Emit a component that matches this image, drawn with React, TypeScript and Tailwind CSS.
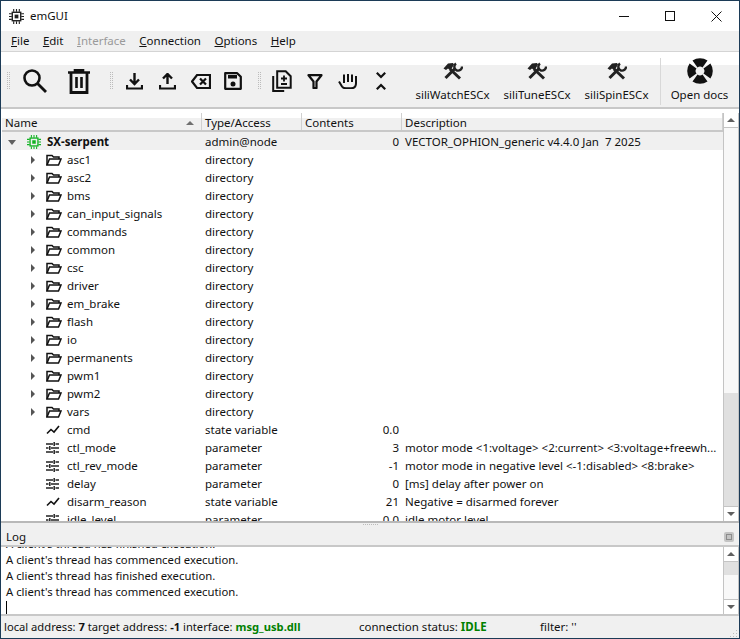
const dirs = ["asc1", "asc2", "bms", "can_input_signals", "commands", "common", "csc", "driver", "em_brake", "flash", "io", "permanents", "pwm1", "pwm2", "vars"];

const leaves = [
  { name: "cmd", kind: "state variable", value: "0.0", desc: "" },
  { name: "ctl_mode", kind: "parameter", value: "3", desc: "motor mode <1:voltage> <2:current> <3:voltage+freewh..." },
  { name: "ctl_rev_mode", kind: "parameter", value: "-1", desc: "motor mode in negative level <-1:disabled> <8:brake>" },
  { name: "delay", kind: "parameter", value: "0", desc: "[ms] delay after power on" },
  { name: "disarm_reason", kind: "state variable", value: "21", desc: "Negative = disarmed forever" },
  { name: "idle_level", kind: "parameter", value: "0.0", desc: "idle motor level" },
];

const gripDots = [0, 2, 4, 6, 8, 10, 12, 14, 16];

function Grip({ className }: { className: string }) {
  return (
    <svg width="4" height="18" viewBox="0 0 4 18" fill="#bcbcbc" className={`shrink-0 ${className}`}>
      {gripDots.map((y) => (
        <g key={y}>
          <rect x="0" y={y} width="1" height="1" />
          <rect x="2" y={y} width="1" height="1" />
        </g>
      ))}
    </svg>
  );
}

function Icon({ w, h, className, children }: { w: number; h: number; className: string; children: React.ReactNode }) {
  return (
    <svg width={w} height={h} viewBox={`0 0 ${w} ${h}`} fill="none" stroke="#111" strokeWidth="2.2" className={`shrink-0 ${className}`}>
      {children}
    </svg>
  );
}

function Folder() {
  return (
    <svg width="16" height="14" viewBox="0 0 16 14" fill="none" stroke="#111" strokeWidth="1.5">
      <path d="M1 12V2.500h5l1.500 1.500H13v2" />
      <path d="M1 12l2.500-6H15l-2.500 6z" />
    </svg>
  );
}

function Wave() {
  return (
    <svg width="14" height="10" viewBox="0 0 14 10" fill="none" stroke="#111" strokeWidth="1.6">
      <path d="M1 8.500l4-4 3 2.500 5-6" />
    </svg>
  );
}

function Sliders() {
  return (
    <svg width="13" height="12" viewBox="0 0 13 12" fill="none" stroke="#222" strokeWidth="1.5">
      <path d="M0 2h7M9.500 2H13M8.200 0v4M0 6h2.500M5 6h8M3.800 4v4M0 10h7M9.500 10H13M8.200 8v4" />
    </svg>
  );
}

function Tools() {
  return (
    <svg width="20" height="18" viewBox="0 0 20 18" fill="none" stroke="#222">
      <path d="M2.500 16L12.500 6" strokeWidth="3" />
      <path d="M13 1.500a4 4 0 0 0 1 7 4 4 0 0 0 5-4" strokeWidth="2.400" />
      <path d="M7 7l10 9.500" strokeWidth="3" />
      <path d="M0.500 6.500L5 1.500l5-.5 1 1.500-3.500 6L5 6.500 3 8z" fill="#222" stroke="none" />
    </svg>
  );
}

function Docs() {
  return (
    <svg width="26" height="26" viewBox="0 0 26 26" fill="#111">
      <path d="M5.500 2.600a13 13 0 0 1 15 0L15.500 9.500a4 4 0 0 0-5 0z" />
      <path d="M23.400 5.500a13 13 0 0 1 0 15L16.500 15.500a4 4 0 0 0 0-5z" />
      <path d="M20.500 23.400a13 13 0 0 1-15 0L10.500 16.500a4 4 0 0 0 5 0z" />
      <path d="M2.600 20.500a13 13 0 0 1 0-15L9.500 10.500a4 4 0 0 0 0 5z" />
    </svg>
  );
}

function Chip({ color, size }: { color: string; size: number }) {
  return (
    <svg width={size} height={size} viewBox="0 0 16 16" fill="none" stroke={color}>
      <rect x="3.500" y="3.500" width="9" height="9" strokeWidth="1.500" />
      <rect x="6" y="6" width="4" height="4" fill={color} stroke="none" />
      <path d="M5 0v3M8 0v3M11 0v3M5 13v3M8 13v3M11 13v3M0 5h3M0 8h3M0 11h3M13 5h3M13 8h3M13 11h3" strokeWidth="1.200" />
    </svg>
  );
}

function TreeRow({ name, kind, value, desc, icon, arrow }: { name: string; kind: string; value?: string; desc?: string; icon: React.ReactNode; arrow?: boolean }) {
  return (
    <div className="flex h-[18px] shrink-0 items-center pt-[2px]">
      <div className="flex w-[200px] items-center">
        <div className="flex w-[44px] justify-end pr-[11px]">
          {arrow && <div className="h-0 w-0 border-y-[4px] border-l-[4px] border-y-transparent border-l-[#555]" />}
        </div>
        <div className="flex w-[21px] items-center">{icon}</div>
        <span className="whitespace-nowrap">{name}</span>
      </div>
      <div className="w-[100px] pl-[3px]">{kind}</div>
      <div className="w-[100px] pr-[3px] text-right">{value}</div>
      <div className="whitespace-nowrap pl-[3px]">{desc}</div>
    </div>
  );
}

function ScrollButton({ up }: { up?: boolean }) {
  return (
    <div className={up ? "flex h-[15px] shrink-0 items-center justify-center border-b border-[#c4c4c4] bg-white" : "flex h-[15px] shrink-0 items-center justify-center border-t border-[#c4c4c4] bg-white"}>
      <div className={up ? "h-0 w-0 border-x-[4px] border-b-[4px] border-x-transparent border-b-[#606060]" : "h-0 w-0 border-x-[4px] border-t-[4px] border-x-transparent border-t-[#606060]"} />
    </div>
  );
}

function HeaderCell({ label, width, sort }: { label: string; width: string; sort?: boolean }) {
  return (
    <div className={`flex h-[17px] items-center justify-between border-r border-[#d0d0d0] bg-gradient-to-b from-white from-30% to-[#f0f0f0] to-30% pl-[3px] pr-[7px] pt-[2px] ${width}`}>
      <span>{label}</span>
      {sort && <div className="h-0 w-0 border-x-[4px] border-b-[4px] border-x-transparent border-b-[#707070]" />}
    </div>
  );
}

export default function App() {
  return (
    <div className="flex h-[639px] w-[740px] flex-col overflow-hidden border border-[#1c3b57] bg-white font-['Noto_Sans',sans-serif] text-[11.5px] text-[#111]">
      {/* Title bar */}
      <div className="flex h-[30px] shrink-0 items-center">
        <div className="ml-[8px] mr-[6px]"><Chip color="#222" size={15} /></div>
        <span>emGUI</span>
        <div className="ml-auto flex items-center">
          <div className="flex h-[30px] w-[46px] items-center justify-center"><div className="h-px w-[10px] bg-[#111]" /></div>
          <div className="flex h-[30px] w-[46px] items-center justify-center"><div className="h-[10px] w-[10px] border border-[#111]" /></div>
          <div className="flex h-[30px] w-[46px] items-center justify-center">
            <svg width="11" height="11" viewBox="0 0 11 11" stroke="#111"><path d="M.5.5l10 10M10.500.5l-10 10" /></svg>
          </div>
        </div>
      </div>

      {/* Menu bar */}
      <div className="flex h-[21px] shrink-0 items-center gap-[13.5px] border-b border-[#d4d4d4] bg-[#f0f0f0] pl-[10px]">
        <span><u>F</u>ile</span>
        <span><u>E</u>dit</span>
        <span className="text-[#9a9a9a]"><u>I</u>nterface</span>
        <span><u>C</u>onnection</span>
        <span><u>O</u>ptions</span>
        <span><u>H</u>elp</span>
      </div>
      <div className="h-[13px] shrink-0 bg-white" />

      {/* Toolbar */}
      <div className="flex h-[44px] shrink-0 items-start border-b-2 border-[#c8c8c8] bg-[#f0f0f0]">
        <div className="flex h-[32px] shrink-0 items-center">
          <Grip className="ml-[6px]" />
          <Icon w={24} h={24} className="ml-[12px]">
            <circle cx="9" cy="9" r="7.500" strokeWidth="2.600" />
            <path d="M14.500 14.500L23 23" strokeWidth="2.800" />
          </Icon>
          <Icon w={22} h={25} className="ml-[21px]">
            <path d="M0 3.500h22M7 3V1h8v2" strokeWidth="2.600" />
            <path d="M3 4v19.500h16V4" strokeWidth="2.800" />
            <path d="M8.500 8v11M13.500 8v11" strokeWidth="2.600" />
          </Icon>
          <Grip className="ml-[20px]" />
          <Icon w={17} h={17} className="ml-[12px]">
            <path d="M8.500 0v10M4 6.500l4.500 4.500L13 6.500" strokeWidth="2.400" />
            <path d="M1 12v3.500h15V12" />
          </Icon>
          <Icon w={17} h={17} className="ml-[16px]">
            <path d="M8.500 11V1.500M4 5.500L8.500 1 13 5.500" strokeWidth="2.400" />
            <path d="M1 12v3.500h15V12" />
          </Icon>
          <Icon w={20} h={17} className="ml-[15px]">
            <path d="M6 2h13v13H6L1 8.500z" />
            <path d="M9 5.500l6 6M15 5.500l-6 6" />
          </Icon>
          <Icon w={18} h={18} className="ml-[13px]">
            <path d="M1.200 1.200h12l3.600 3.600v12H1.200z" strokeLinejoin="round" />
            <rect x="4" y="3" width="9" height="3.500" fill="#111" stroke="none" />
            <circle cx="9" cy="12" r="2.500" fill="#111" stroke="none" />
          </Icon>
          <Grip className="ml-[16px]" />
          <Icon w={20} h={22} className="ml-[10px]">
            <path d="M5.200 1.200h8.500l5 5v11.500H5.200z" strokeWidth="2" />
            <path d="M1.200 6v15h11" strokeWidth="2" />
            <path d="M12 5.500v6M9 8.500h6M9 14h6" strokeWidth="1.800" />
          </Icon>
          <Icon w={16} h={15} className="ml-[15px]">
            <path d="M1.500 1.200h13L9.500 7.500V14h-3V7.500z" strokeWidth="2.200" strokeLinejoin="round" />
          </Icon>
          <Icon w={20} h={16} className="ml-[15px]">
            <path d="M1 8.500l3 5c1 1.500 2.500 1.800 4 1.800h5c3 0 5-2 5-5V3" strokeWidth="2" />
            <path d="M6 10V1.500M10 9V1M14 9V1.500M18 9V3" strokeWidth="2" />
          </Icon>
          <Icon w={10} h={18} className="ml-[18px]">
            <path d="M.8 .8L5 5 9.200 .8M.8 17.200L5 13l4.200 4.200" strokeWidth="2.200" />
          </Icon>
        </div>
        <div className="ml-[24px] flex -mt-[3px] shrink-0">
          {[
            { label: "siliWatchESCx", w: "w-[85px]" },
            { label: "siliTuneESCx", w: "w-[84px]" },
            { label: "siliSpinESCx", w: "w-[75px]" },
          ].map((b) => (
            <div key={b.label} className={`flex flex-col items-center ${b.w}`}>
              <Tools />
              <span className="mt-[7px] whitespace-nowrap leading-[16px]">{b.label}</span>
            </div>
          ))}
        </div>
        <div className="ml-[6px] -mt-[7px] flex w-[78px] shrink-0 flex-col items-center border-l border-[#d8d8d8] pb-[2px]">
          <Docs />
          <span className="mt-[3px] whitespace-nowrap leading-[16px]">Open docs</span>
        </div>
      </div>

      {/* Tree */}
      <div className="flex h-[414px] shrink-0 border-b-2 border-[#b8b8b8] pt-[4px] pl-[1px]">
        <div className="flex min-w-0 flex-1 flex-col overflow-hidden">
          <div className="flex shrink-0 border-b-2 border-[#c8c8c8]">
            <HeaderCell label="Name" width="w-[200px]" sort />
            <HeaderCell label="Type/Access" width="w-[100px]" />
            <HeaderCell label="Contents" width="w-[100px]" />
            <HeaderCell label="Description" width="flex-1" />
          </div>
          <div className="flex h-[18px] shrink-0 items-center bg-[#f0f0f0] pt-[2px]">
            <div className="flex w-[200px] items-center">
              <div className="ml-[6px] h-0 w-0 border-x-[4px] border-t-[5px] border-x-transparent border-t-[#606060]" />
              <div className="ml-[11px] w-[20px]"><Chip color="#11b322" size={14} /></div>
              <span className="font-bold">SX-serpent</span>
            </div>
            <div className="w-[100px] pl-[3px]">admin@node</div>
            <div className="w-[100px] pr-[3px] text-right">0</div>
            <div className="whitespace-pre pl-[3px]">VECTOR_OPHION_generic v4.4.0 Jan  7 2025</div>
          </div>
          {dirs.map((d) => (
            <TreeRow key={d} name={d} kind="directory" icon={<Folder />} arrow />
          ))}
          {leaves.map((l) => (
            <TreeRow key={l.name} name={l.name} kind={l.kind} value={l.value} desc={l.desc} icon={l.kind === "parameter" ? <Sliders /> : <Wave />} />
          ))}
        </div>
        <div className="flex w-[16px] shrink-0 flex-col border-x border-[#c4c4c4]">
          <ScrollButton up />
          <div className="flex-1 bg-[#f8f8f8] pt-[265px]"><div className="h-[113px] bg-[#e0e0e0]" /></div>
          <ScrollButton />
        </div>
      </div>

      {/* Log dock */}
      <div className="relative flex h-[24px] shrink-0 items-center justify-between border-b-2 border-[#c8c8c8] bg-[#f0f0f0] px-[5px] pt-[5px]">
        <div className="absolute left-[362px] top-[1px] flex gap-px">
          {[0, 1, 2, 3, 4, 5, 6, 7].map((i) => (
            <div key={i} className="h-px w-px bg-[#bcbcbc]" />
          ))}
        </div>
        <span>Log</span>
        <div className="flex h-[10px] w-[10px] items-center justify-center rounded-[2px] bg-[#c4c4c4]"><div className="h-[6px] w-[6px] border border-[#8c8c8c]" /></div>
      </div>
      <div className="flex h-[69px] shrink-0 border-b-2 border-[#c8c8c8]">
        <div className="min-w-0 flex-1 overflow-hidden pl-[5px] text-[11.3px]">
          <div className="-mt-[11px] leading-[16px]">
            <div>A client's thread has finished execution.</div>
            <div>A client's thread has commenced execution.</div>
            <div>A client's thread has finished execution.</div>
            <div>A client's thread has commenced execution.</div>
            <div className="mt-px h-[15px] w-px bg-black" />
          </div>
        </div>
        <div className="flex w-[16px] shrink-0 flex-col border-x border-[#c4c4c4]">
          <ScrollButton up />
          <div className="flex-1 bg-[#f8f8f8]"><div className="h-[13px] bg-[#e0e0e0]" /></div>
          <ScrollButton />
        </div>
      </div>

      {/* Status bar */}
      <div className="flex flex-1 items-center bg-[#f0f0f0] pl-[3px]">
        <span className="w-[355px] whitespace-nowrap text-[11.2px]">local address: <b>7</b> target address: <b>-1</b> interface: <b className="text-[#008000]">msg_usb.dll</b></span>
        <span className="w-[181px] whitespace-nowrap">connection status: <b className="text-[#008000]">IDLE</b></span>
        <span>filter: ''</span>
        <svg width="9" height="9" viewBox="0 0 9 9" fill="#bdbdbd" className="ml-auto mr-[1px] self-end">
          <rect x="7" y="1" width="1" height="1" />
          <rect x="4" y="4" width="1" height="1" />
          <rect x="7" y="4" width="1" height="1" />
          <rect x="1" y="7" width="1" height="1" />
          <rect x="4" y="7" width="1" height="1" />
          <rect x="7" y="7" width="1" height="1" />
        </svg>
      </div>
    </div>
  );
}
